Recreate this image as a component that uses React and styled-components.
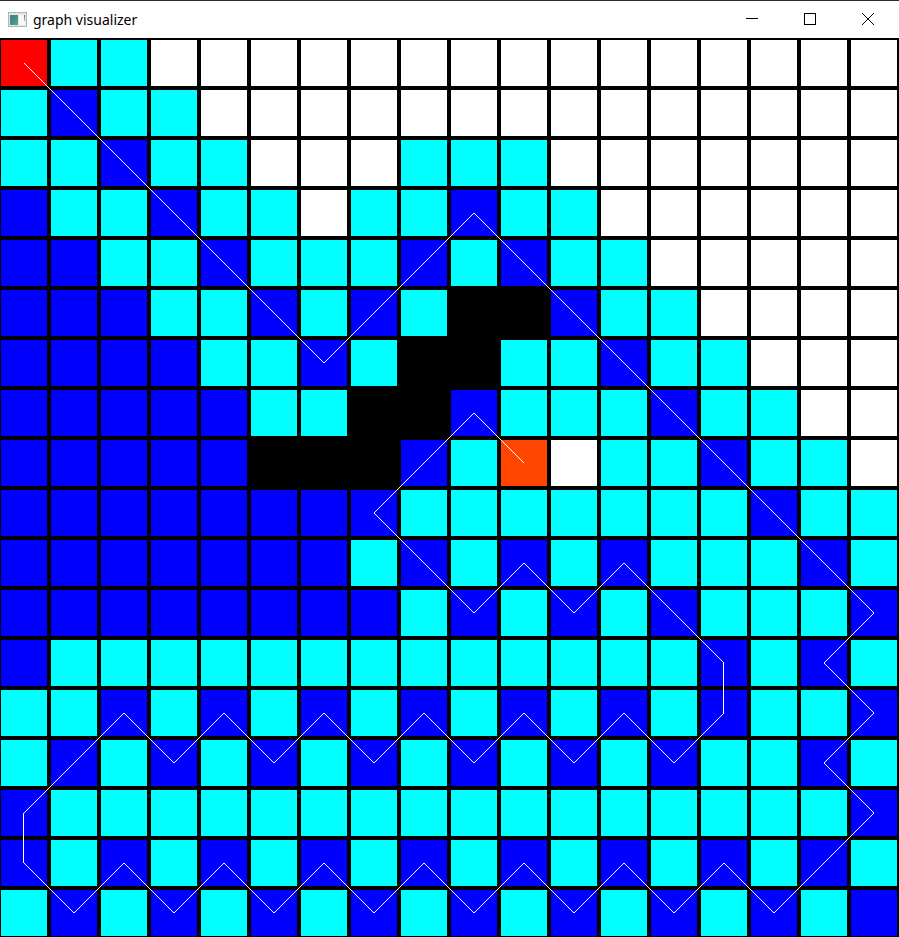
import React from "react";
import styled, { createGlobalStyle } from "styled-components";

const GlobalStyle = createGlobalStyle`
  *, *::before, *::after { box-sizing: border-box; }
  body { margin: 0; background: #fff; font-family: "Noto Sans", "Open Sans", sans-serif; }
`;

const CELL_COLORS = {
  S: "#ff0000",
  G: "#ff4500",
  b: "#0000ff",
  c: "#00ffff",
  k: "#000000",
  w: "#ffffff",
};

// S start, G goal, b closed, c open, k wall, w unvisited
const ROWS = [
  "Sccwwwwwwwwwwwwwww",
  "cbccwwwwwwwwwwwwww",
  "ccbccwwwcccwwwwwww",
  "bccbccwccbccwwwwww",
  "bbccbcccbcbccwwwww",
  "bbbccbcbckkbccwwww",
  "bbbbccbckkccbccwww",
  "bbbbbcckkbcccbccww",
  "bbbbbkkkbcGwccbccw",
  "bbbbbbbbcccccccbcc",
  "bbbbbbbcbcbcbcccbc",
  "bbbbbbbbcbcbcbcccb",
  "bcccccccccccccbcbc",
  "ccbcbcbcbcbcbcbccb",
  "cbcbcbcbcbcbcbccbc",
  "bccccccccccccccccb",
  "bcbcbcbcbcbcbcbcbc",
  "cbcbcbcbcbcbcbcbcb",
];

// Corners of the route as [column, row]
const ROUTE = [
  [0, 0], [6, 6], [9, 3], [17, 11], [16, 12], [17, 13], [16, 14], [17, 15],
  [15, 17], [14, 16], [13, 17], [12, 16], [11, 17], [10, 16], [9, 17],
  [8, 16], [7, 17], [6, 16], [5, 17], [4, 16], [3, 17], [2, 16], [1, 17],
  [0, 16], [0, 15], [2, 13], [3, 14], [4, 13], [5, 14], [6, 13], [7, 14],
  [8, 13], [9, 14], [10, 13], [11, 14], [12, 13], [13, 14], [14, 13],
  [14, 12], [12, 10], [11, 11], [10, 10], [9, 11], [7, 9], [9, 7], [10, 8],
];

const PITCH = 50;
const routePoints = ROUTE.map(([c, r]) => `${23.9 + c * PITCH},${25 + r * PITCH}`).join(" ");

const Window = styled.main`
  width: 100%;
  border-top: 1px solid #2b2b2b;
  background: #fff;
`;

const TitleBar = styled.header`
  display: flex;
  align-items: center;
  height: 37px;
  padding: 0 2px 0 8px;
`;

const AppIcon = styled.svg`
  flex: none;
  width: 20px;
  height: 17px;
  margin-right: 5px;
`;

const Title = styled.h1`
  flex: 1;
  margin: 0;
  font-size: 14px;
  font-weight: 400;
  line-height: 20px;
  color: #000;
`;

const Controls = styled.div`
  display: flex;
  height: 36px;
  align-self: flex-start;
`;

const ControlButton = styled.button`
  display: flex;
  align-items: center;
  justify-content: center;
  width: 58px;
  padding: 0;
  border: 0;
  background: transparent;
  color: #000;

  &:hover { background: #e5e5e5; }
`;

const Glyph = styled.svg`
  width: 12px;
  height: 12px;
  fill: none;
  stroke: currentColor;
`;

const Board = styled.section`
  position: relative;
  padding: 2px 2px 1px 1px;
  background: #000;
`;

const Cells = styled.div`
  display: grid;
  grid-template-columns: repeat(18, 1fr);
  gap: 4px;
`;

const Cell = styled.div`
  aspect-ratio: 1;
  background: ${({ $kind }) => CELL_COLORS[$kind]};
`;

const Route = styled.svg`
  position: absolute;
  inset: 0;
  width: 100%;
  height: 100%;
  pointer-events: none;

  polyline {
    fill: none;
    stroke: #fff;
    stroke-width: 1px;
    vector-effect: non-scaling-stroke;
  }
`;

export default function App() {
  return (
    <>
      <GlobalStyle />
      <Window>
        <TitleBar>
          <AppIcon viewBox="0 0 20 17" aria-hidden="true">
            <defs>
              <linearGradient id="pane" x1="0" y1="0" x2="1" y2="1">
                <stop offset="0" stopColor="#4879a5" />
                <stop offset="0.5" stopColor="#438f86" />
                <stop offset="1" stopColor="#62ae79" />
              </linearGradient>
              <linearGradient id="side" x1="0" y1="0" x2="0" y2="1">
                <stop offset="0" stopColor="#4779b0" />
                <stop offset="1" stopColor="#8fd0a0" />
              </linearGradient>
            </defs>
            <rect x="0.5" y="1.5" width="18" height="14" fill="#e4e7ea" stroke="#b0b4b8" />
            <rect x="2" y="4" width="8" height="10" fill="url(#pane)" />
            <rect x="11" y="4" width="6" height="10" fill="#f8f8f8" />
            <rect x="16" y="4" width="1" height="6" fill="url(#side)" />
          </AppIcon>
          <Title>graph visualizer</Title>
          <Controls>
            <ControlButton type="button" aria-label="Minimize">
              <Glyph viewBox="0 0 12 12" shapeRendering="crispEdges">
                <path d="M0 5.5H12" />
              </Glyph>
            </ControlButton>
            <ControlButton type="button" aria-label="Maximize">
              <Glyph viewBox="0 0 12 12" shapeRendering="crispEdges">
                <rect x="0.5" y="0.5" width="11" height="11" />
              </Glyph>
            </ControlButton>
            <ControlButton type="button" aria-label="Close">
              <Glyph viewBox="0 0 12 12">
                <path d="M0 0L12 12M12 0L0 12" />
              </Glyph>
            </ControlButton>
          </Controls>
        </TitleBar>
        <Board aria-label="Search grid">
          <Cells>
            {ROWS.map((row, r) =>
              [...row].map((kind, c) => <Cell key={`${r}-${c}`} $kind={kind} />)
            )}
          </Cells>
          <Route viewBox="0 0 899 899" preserveAspectRatio="none" shapeRendering="crispEdges" aria-hidden="true">
            <polyline points={routePoints} />
          </Route>
        </Board>
      </Window>
    </>
  );
}
